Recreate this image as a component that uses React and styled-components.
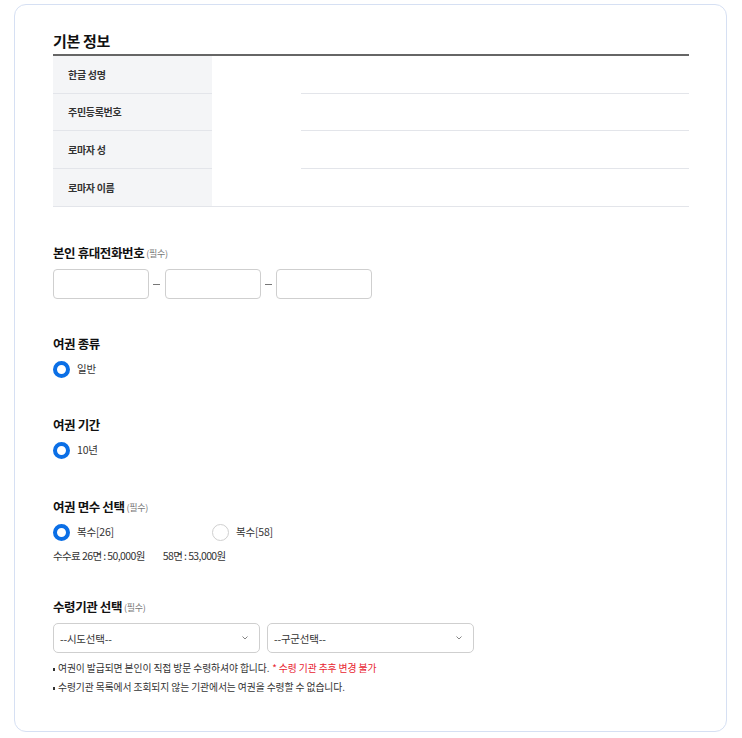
import React from "react";
import styled, { createGlobalStyle } from "styled-components";

const Global = createGlobalStyle`
  html, body { margin: 0; padding: 0; background: #fff; }
  body { font-family: "Noto Sans CJK KR", "Noto Sans", sans-serif; color: #222; }
  * { box-sizing: border-box; }
`;

const Page = styled.div`
  padding: 4px 15px 6px 14px;
`;

const Card = styled.div`
  border: 1px solid #d6e0f3;
  border-radius: 12px;
  padding: 26px 37px 34px 38px;
`;

const BoxTitle = styled.h2`
  margin: 0;
  font-size: 15px;
  font-weight: 700;
  line-height: 20px;
  height: 25px;
  padding-bottom: 3px;
  border-bottom: 2px solid #666;
  color: #111;
  letter-spacing: -0.3px;
`;

const Table = styled.div`
  display: flex;
  flex-direction: column;
  border-bottom: 1px solid #e3e5ea;
`;

const Row = styled.div`
  display: grid;
  grid-template-columns: 159px 1fr;
  height: 37.5px;
`;

const Th = styled.div`
  background: #f4f5f7;
  font-size: 10px;
  font-weight: 700;
  color: #333;
  display: flex;
  align-items: center;
  padding-left: 15px;
  letter-spacing: -0.3px;
  border-bottom: ${(p) => (p.$last ? "none" : "1px solid #e3e5ea")};
`;

const Td = styled.div`
  display: flex;
  flex-direction: column;
  justify-content: flex-end;
`;

const TdLine = styled.div`
  margin-left: 89px;
  border-bottom: ${(p) => (p.$last ? "none" : "1px solid #e3e5ea")};
`;

const Section = styled.section`
  margin-top: ${(p) => p.$mt}px;
  display: flex;
  flex-direction: column;
`;

const Label = styled.h3`
  margin: 0 0 ${(p) => p.$mb}px;
  height: 18px;
  font-size: 12.5px;
  font-weight: 700;
  line-height: 18px;
  color: #111;
  letter-spacing: -0.4px;
  display: flex;
  align-items: center;
  gap: 2px;
`;

const Req = styled.span`
  font-size: 9px;
  font-weight: 400;
  color: #777;
  line-height: 18px;
  letter-spacing: -0.3px;
  padding-top: 1px;
`;

const PhoneRow = styled.div`
  display: flex;
  align-items: center;
`;

const Input = styled.div`
  width: 96px;
  height: 30px;
  border: 1px solid #cfcfcf;
  border-radius: 4px;
  background: #fff;
`;

const Dash = styled.span`
  width: 15.5px;
  display: flex;
  justify-content: center;
  &::before {
    content: "";
    width: 7px;
    height: 1px;
    background: #777;
  }
`;

const Radios = styled.div`
  display: flex;
  align-items: center;
  height: 20px;
`;

const RadioItem = styled.label`
  display: flex;
  align-items: center;
  gap: 7px;
  width: ${(p) => (p.$w ? `${p.$w}px` : "auto")};
  font-size: 10.5px;
  line-height: 20px;
  color: #333;
  letter-spacing: -0.2px;
`;

const Dot = styled.span`
  width: 17px;
  height: 17px;
  border-radius: 50%;
  flex-shrink: 0;
  border: ${(p) => (p.$on ? "4px solid #0b6fe6" : "1px solid #cfcfcf")};
  background: #fff;
`;

const Fee = styled.p`
  margin: 6px 0 0;
  height: 16px;
  font-size: 10.5px;
  line-height: 16px;
  color: #333;
  letter-spacing: -0.6px;
  display: flex;
  gap: 18px;
`;

const SelectRow = styled.div`
  display: flex;
  gap: 7px;
`;

const Select = styled.div`
  width: 207px;
  height: 30px;
  border: 1px solid #cfcfcf;
  border-radius: 5px;
  display: flex;
  align-items: center;
  justify-content: space-between;
  padding: 0 11px 0 6px;
  font-size: 10.5px;
  color: #333;
  letter-spacing: -0.2px;
`;

const Notes = styled.ul`
  list-style: none;
  margin: 5.5px 0 0;
  padding: 0;
`;

const Note = styled.li`
  height: 19px;
  font-size: 9.8px;
  line-height: 19px;
  color: #333;
  letter-spacing: -0.1px;
  display: flex;
  align-items: center;
  gap: 3px;
  &::before {
    content: "";
    width: 2px;
    height: 3px;
    background: #333;
    margin-top: 2px;
  }
`;

const Red = styled.span`
  color: #e8232f;
  margin-left: 3px;
`;

const Chevron = () => (
  <svg width="6" height="4" viewBox="0 0 6 4" fill="none">
    <path d="M0.5 0.5L3 3L5.5 0.5" stroke="#777" strokeWidth="0.9" />
  </svg>
);

const rows = ["한글 성명", "주민등록번호", "로마자 성", "로마자 이름"];

export default function App() {
  return (
    <Page>
      <Global />
      <Card>
        <BoxTitle>기본 정보</BoxTitle>
        <Table>
          {rows.map((r, i) => (
            <Row key={r}>
              <Th $last={i === rows.length - 1}>{r}</Th>
              <Td>
                <TdLine $last={i === rows.length - 1} />
              </Td>
            </Row>
          ))}
        </Table>

        <Section $mt={37}>
          <Label $mb={7}>
            본인 휴대전화번호 <Req>(필수)</Req>
          </Label>
          <PhoneRow>
            <Input />
            <Dash />
            <Input />
            <Dash />
            <Input />
          </PhoneRow>
        </Section>

        <Section $mt={36}>
          <Label $mb={6}>여권 종류</Label>
          <Radios>
            <RadioItem>
              <Dot $on />
              일반
            </RadioItem>
          </Radios>
        </Section>

        <Section $mt={37}>
          <Label $mb={6}>여권 기간</Label>
          <Radios>
            <RadioItem>
              <Dot $on />
              10년
            </RadioItem>
          </Radios>
        </Section>

        <Section $mt={38}>
          <Label $mb={6}>
            여권 면수 선택 <Req>(필수)</Req>
          </Label>
          <Radios>
            <RadioItem $w={159}>
              <Dot $on />
              복수[26]
            </RadioItem>
            <RadioItem>
              <Dot />
              복수[58]
            </RadioItem>
          </Radios>
          <Fee>
            <span>수수료 26면 : 50,000원</span>
            <span>58면 : 53,000원</span>
          </Fee>
        </Section>

        <Section $mt={34}>
          <Label $mb={7}>
            수령기관 선택 <Req>(필수)</Req>
          </Label>
          <SelectRow>
            <Select>
              --시도선택--
              <Chevron />
            </Select>
            <Select>
              --구군선택--
              <Chevron />
            </Select>
          </SelectRow>
          <Notes>
            <Note>
              <span>
                여권이 발급되면 본인이 직접 방문 수령하셔야 합니다.
                <Red>* 수령 기관 추후 변경 불가</Red>
              </span>
            </Note>
            <Note>수령기관 목록에서 조회되지 않는 기관에서는 여권을 수령할 수 없습니다.</Note>
          </Notes>
        </Section>
      </Card>
    </Page>
  );
}
